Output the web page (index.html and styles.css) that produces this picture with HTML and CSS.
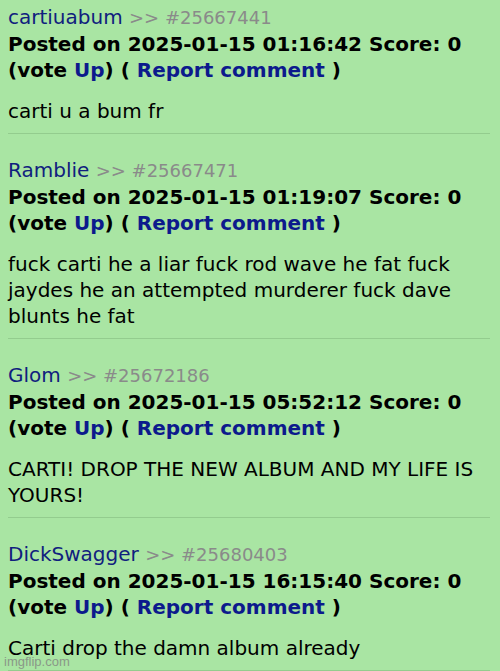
FILE: index.html
```html
<!DOCTYPE html>
<html lang="en">
<head>
  <meta charset="UTF-8">
  <title>Comments</title>
  <link rel="stylesheet" href="styles.css">
</head>
<body>
  <div class="comments">
    <div class="comment">
      <div class="head"><a class="user" href="#">cartiuabum</a> <span class="ref">&gt;&gt; #25667441</span></div>
      <div class="meta">Posted on 2025-01-15 01:16:42 Score: 0</div>
      <div class="meta">(vote <a href="#">Up</a>) ( <a href="#">Report comment</a> )</div>
      <p class="body">carti u a bum fr</p>
    </div>
    <div class="comment">
      <div class="head"><a class="user" href="#">Ramblie</a> <span class="ref">&gt;&gt; #25667471</span></div>
      <div class="meta">Posted on 2025-01-15 01:19:07 Score: 0</div>
      <div class="meta">(vote <a href="#">Up</a>) ( <a href="#">Report comment</a> )</div>
      <p class="body">fuck carti he a liar fuck rod wave he fat fuck jaydes he an attempted murderer fuck dave blunts he fat</p>
    </div>
    <div class="comment">
      <div class="head"><a class="user" href="#">Glom</a> <span class="ref">&gt;&gt; #25672186</span></div>
      <div class="meta">Posted on 2025-01-15 05:52:12 Score: 0</div>
      <div class="meta">(vote <a href="#">Up</a>) ( <a href="#">Report comment</a> )</div>
      <p class="body">CARTI! DROP THE NEW ALBUM AND MY LIFE IS YOURS!</p>
    </div>
    <div class="comment">
      <div class="head"><a class="user" href="#">DickSwagger</a> <span class="ref">&gt;&gt; #25680403</span></div>
      <div class="meta">Posted on 2025-01-15 16:15:40 Score: 0</div>
      <div class="meta">(vote <a href="#">Up</a>) ( <a href="#">Report comment</a> )</div>
      <p class="body">Carti drop the damn album already</p>
    </div>
  </div>
  <div class="watermark">imgflip.com</div>
</body>
</html>
```
FILE: styles.css
```css
body {
  margin: 0;
  background: #a9e5a3;
  font-family: "DejaVu Sans", Verdana, sans-serif;
  font-size: 20px;
  color: #000;
  height: 671px;
  overflow: hidden;
  position: relative;
}

.comments {
  padding: 4px 10px 0 8px;
}

.comment {
  border-bottom: 1px solid #93cc8e;
  padding-bottom: 9px;
  margin-bottom: 23px;
}

.head, .meta {
  line-height: 26px;
}

.meta {
  font-weight: bold;
}

a {
  color: #0c1a8c;
  text-decoration: none;
}

.user {
  color: #10207e;
}

.ref {
  color: #8a8a8a;
  font-size: 18px;
}

.body {
  margin: 15px 0 0;
  line-height: 26px;
}

.watermark {
  position: absolute;
  left: 4px;
  bottom: 2px;
  font-family: "Liberation Sans", Arial, sans-serif;
  font-size: 13px;
  color: #8a9888;
}
```
